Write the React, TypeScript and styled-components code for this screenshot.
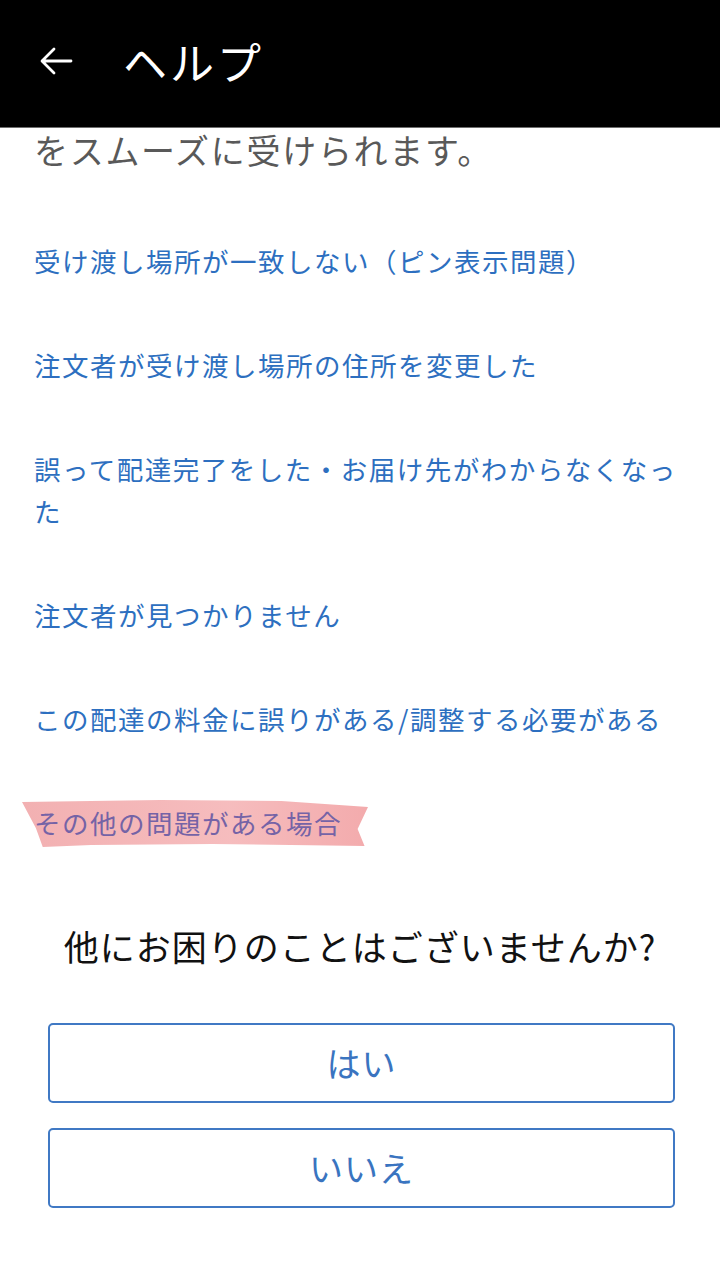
import React from "react";
import styled, { createGlobalStyle } from "styled-components";

const Global = createGlobalStyle`
  html, body { margin: 0; padding: 0; background: #ffffff; }
  body { font-family: "Noto Sans CJK JP", "Noto Sans", sans-serif; }
  * { box-sizing: border-box; }
`;

const Page = styled.div`
  width: 720px;
  min-height: 1280px;
  background: #ffffff;
  display: flex;
  flex-direction: column;
`;

const Header = styled.header`
  height: 128px;
  background: #000000;
  display: flex;
  align-items: center;
  padding: 0 0 6px 38px;
  gap: 49px;
  border-bottom: 1px solid #6e6e6e;
`;

const BackButton = styled.button`
  width: 36px;
  height: 36px;
  padding: 0;
  background: none;
  border: none;
  display: flex;
  align-items: center;
  justify-content: center;
`;

const Title = styled.h1`
  margin: 0;
  color: #ffffff;
  font-size: 44px;
  font-weight: 400;
  letter-spacing: 3px;
`;

const Content = styled.main`
  padding: 0 34px;
  display: flex;
  flex-direction: column;
`;

const Intro = styled.p`
  margin: 2px 0 0;
  font-size: 34px;
  line-height: 40px;
  letter-spacing: 1.7px;
  color: #595959;
`;

const LinkList = styled.ul`
  list-style: none;
  margin: 70px 0 0;
  padding: 0;
  display: flex;
  flex-direction: column;
  gap: 62px;
`;

const LinkItem = styled.li`
  font-size: 26.5px;
  line-height: 42px;
  letter-spacing: 1.5px;
  color: #2d6fc0;
`;

const Highlight = styled.span`
  position: relative;
  display: inline-block;
  color: #7563a6;
  &::before {
    content: "";
    position: absolute;
    left: -12px;
    right: -26px;
    top: -4px;
    bottom: -4px;
    background: linear-gradient(90deg, rgba(238,150,152,0.75), rgba(242,160,162,0.7) 60%, rgba(240,150,152,0.8));
    clip-path: polygon(0% 8%, 40% 4%, 75% 6%, 100% 18%, 97% 62%, 99% 96%, 55% 92%, 20% 94%, 6% 98%, 4% 60%);
    z-index: 0;
  }
  & > span {
    position: relative;
    z-index: 1;
  }
`;

const Question = styled.h2`
  margin: 81px 0 0;
  text-align: center;
  font-size: 35px;
  line-height: 42px;
  letter-spacing: 1px;
  font-weight: 400;
  color: #111111;
`;

const ButtonGroup = styled.div`
  margin: 56px 0 0;
  padding: 0 11px 0 14px;
  display: flex;
  flex-direction: column;
  gap: 25px;
`;

const AnswerButton = styled.button`
  height: 80px;
  background: #ffffff;
  border: 2px solid #4079c4;
  border-radius: 5px;
  color: #3a74c0;
  font-family: "Noto Sans CJK JP", "Noto Sans", sans-serif;
  font-size: 34px;
  letter-spacing: 1px;
  line-height: 1;
`;

const links = [
  "受け渡し場所が一致しない（ピン表示問題）",
  "注文者が受け渡し場所の住所を変更した",
  "誤って配達完了をした・お届け先がわからなくなった",
  "注文者が見つかりません",
  "この配達の料金に誤りがある/調整する必要がある",
];

export default function App() {
  return (
    <Page>
      <Global />
      <Header>
        <BackButton aria-label="戻る">
          <svg width="34" height="30" viewBox="0 0 34 30" fill="none">
            <path d="M32 15H4M15 3L3 15l12 12" stroke="#fff" strokeWidth="2.8" strokeLinecap="round" strokeLinejoin="round" />
          </svg>
        </BackButton>
        <Title>ヘルプ</Title>
      </Header>
      <Content>
        <Intro>をスムーズに受けられます。</Intro>
        <LinkList>
          {links.map((l) => (
            <LinkItem key={l}>{l}</LinkItem>
          ))}
          <LinkItem>
            <Highlight>
              <span>その他の問題がある場合</span>
            </Highlight>
          </LinkItem>
        </LinkList>
        <Question>他にお困りのことはございませんか?</Question>
        <ButtonGroup>
          <AnswerButton>はい</AnswerButton>
          <AnswerButton>いいえ</AnswerButton>
        </ButtonGroup>
      </Content>
    </Page>
  );
}
